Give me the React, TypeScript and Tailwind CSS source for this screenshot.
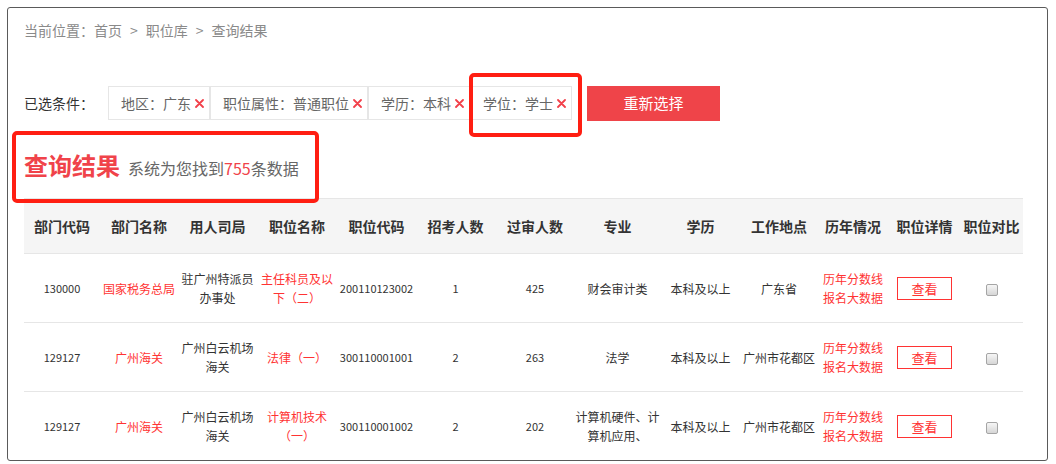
import React from 'react'

const cols = [
  { label: '部门代码', w: 'w-[76px]' },
  { label: '部门名称', w: 'w-[78px]' },
  { label: '用人司局', w: 'w-[79px]' },
  { label: '职位名称', w: 'w-[80px]' },
  { label: '职位代码', w: 'w-[79px]' },
  { label: '招考人数', w: 'w-[79px]' },
  { label: '过审人数', w: 'w-[80px]' },
  { label: '专业', w: 'w-[85px]' },
  { label: '学历', w: 'w-[81px]' },
  { label: '工作地点', w: 'w-[76px]' },
  { label: '历年情况', w: 'w-[72px]' },
  { label: '职位详情', w: 'w-[71px]' },
  { label: '职位对比', w: 'w-[63px]' },
]

const rows = [
  {
    code: '130000',
    dept: '国家税务总局',
    bureau: '驻广州特派员办事处',
    post: '主任科员及以下（二）',
    postCode: '200110123002',
    quota: '1',
    passed: '425',
    major: '财会审计类',
    edu: '本科及以上',
    place: '广东省',
  },
  {
    code: '129127',
    dept: '广州海关',
    bureau: '广州白云机场海关',
    post: '法律（一）',
    postCode: '300110001001',
    quota: '2',
    passed: '263',
    major: '法学',
    edu: '本科及以上',
    place: '广州市花都区',
  },
  {
    code: '129127',
    dept: '广州海关',
    bureau: '广州白云机场海关',
    post: '计算机技术（一）',
    postCode: '300110001002',
    quota: '2',
    passed: '202',
    major: '计算机硬件、计算机应用、',
    edu: '本科及以上',
    place: '广州市花都区',
  },
]

const tags = ['地区：广东', '职位属性：普通职位', '学历：本科', '学位：学士']

function Cross() {
  return (
    <svg width="9" height="9" viewBox="0 0 9 9" className="shrink-0">
      <path d="M1 1 L8 8 M8 1 L1 8" stroke="#f2404a" strokeWidth="1.8" strokeLinecap="round" />
    </svg>
  )
}

export default function App() {
  return (
    <div className="w-[1056px] h-[464px] bg-white overflow-hidden font-['Noto_Sans_CJK_SC','Noto_Sans',sans-serif]">
      <div className="relative ml-[7px] mt-[7px] w-[1041px] h-[454px] border border-[#5a5a5a] rounded-[3px] overflow-hidden pl-4">
        {/* Breadcrumb */}
        <div className="pt-3 flex items-center text-sm leading-5 text-[#8a8a8a]">
          <span>当前位置：首页</span>
          <span className="mx-2">&gt;</span>
          <span>职位库</span>
          <span className="mx-2">&gt;</span>
          <span>查询结果</span>
        </div>

        {/* Selected filters */}
        <div className="mt-[46px] flex items-center h-[34px]">
          <span className="text-sm text-[#333] w-[84px]">已选条件：</span>
          {tags.map(t => (
            <div
              key={t}
              className="h-[34px] flex items-center gap-1 pl-3 pr-[5px] border border-[#e6e6e6] text-sm text-[#666]"
            >
              <span>{t}</span>
              <Cross />
            </div>
          ))}
          <button className="ml-[15px] w-[133px] h-[35px] bg-[#ef4449] text-white text-[15px]">重新选择</button>
        </div>

        {/* Result title */}
        <div className="mt-[29px] flex items-baseline leading-8">
          <span className="text-2xl font-bold text-[#f0434a]">查询结果</span>
          <span className="ml-2 text-base text-[#666]">
            系统为您找到<span className="text-[#f0434a]">755</span>条数据
          </span>
        </div>

        {/* Table */}
        <table className="mt-[17px] w-[999px] table-fixed border-collapse">
          <colgroup>
            {cols.map(c => (
              <col key={c.label} className={c.w} />
            ))}
          </colgroup>
          <thead>
            <tr className="h-[55px] bg-[#f5f5f5] border-t border-b border-[#e6e6e6]">
              {cols.map(c => (
                <th key={c.label} className="p-0 text-sm font-bold text-[#333] text-center whitespace-nowrap">
                  {c.label}
                </th>
              ))}
            </tr>
          </thead>
          <tbody>
            {rows.map((r, i) => (
              <tr key={i} className="h-[69px] border-b border-[#e6e6e6] text-xs leading-[19px] text-[#333] text-center">
                <td className="p-0 text-[11px]">{r.code}</td>
                <td className="p-0 text-[#f33]">{r.dept}</td>
                <td className="px-[3px]">{r.bureau}</td>
                <td className="px-[3px] text-[#f33]">{r.post}</td>
                <td className="p-0 text-[11px]">{r.postCode}</td>
                <td className="p-0 text-[11px]">{r.quota}</td>
                <td className="p-0 text-[11px]">{r.passed}</td>
                <td className="p-0">{r.major}</td>
                <td className="p-0">{r.edu}</td>
                <td className="p-0">{r.place}</td>
                <td className="p-0 text-[#f33]">
                  <div>历年分数线</div>
                  <div>报名大数据</div>
                </td>
                <td className="p-0">
                  <span className="inline-flex items-center justify-center w-[55px] h-[23px] border border-[#f33] text-[#f33] text-[13px]">
                    查看
                  </span>
                </td>
                <td className="p-0">
                  <span className="inline-block align-middle w-[12px] h-[12px] rounded-[2px] border border-[#a5a5a5] bg-gradient-to-b from-[#f6f6f6] to-[#d6d6d6]" />
                </td>
              </tr>
            ))}
          </tbody>
        </table>

        {/* Red annotation boxes */}
        <div className="absolute left-[461px] top-[65px] w-[113px] h-[64px] border-4 border-[#ff1e12] rounded-[5px]" />
        <div className="absolute left-[4px] top-[123px] w-[307px] h-[72px] border-4 border-[#ff1e12] rounded-[5px]" />
      </div>
    </div>
  )
}
